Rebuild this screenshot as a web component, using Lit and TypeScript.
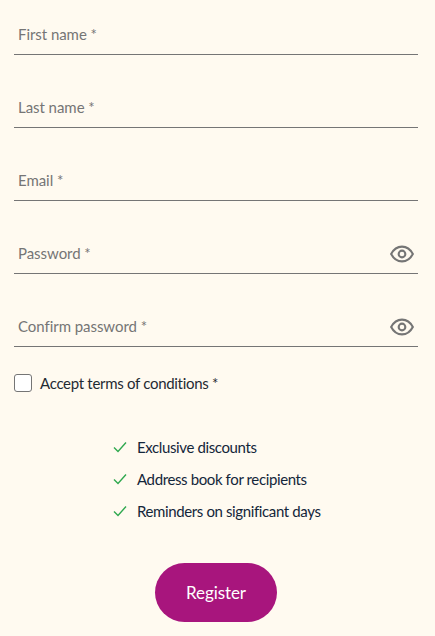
import { LitElement, html, css, svg } from "lit";
import { customElement } from "lit/decorators.js";

const eye = svg`<path d="M1.6 11.5C4 6.9 7.6 4.4 12 4.4s8 2.5 10.4 7.1C20 16.1 16.4 18.6 12 18.6S4 16.1 1.6 11.5Z" fill="none" stroke="#757575" stroke-width="2"/><circle cx="12" cy="11.5" r="3.2" fill="none" stroke="#757575" stroke-width="2"/>`;

@customElement("app-root")
export class AppRoot extends LitElement {
  static styles = css`
    :host {
      display: block;
      height: 636px;
      overflow: hidden;
      background: #fffaf0;
      font-family: Lato, "Liberation Sans", sans-serif;
      box-sizing: border-box;
      padding: 0 17px 0 14px;
    }
    .field {
      height: 55px;
      margin-bottom: 18px;
      box-sizing: border-box;
      border-bottom: 1px solid #757575;
      padding: 0 0 10px 4px;
      display: flex;
      align-items: flex-end;
      justify-content: space-between;
      color: #757575;
      font-size: 15px;
      line-height: 20px;
      letter-spacing: -0.05px;
    }
    .eye {
      width: 28px;
      height: 24px;
      margin: 0 2px -3px 0;
      display: block;
    }
    .terms {
      display: flex;
      align-items: center;
      gap: 8px;
      margin-top: 26px;
      height: 20px;
      color: #1f2a33;
      font-size: 15px;
      letter-spacing: -0.3px;
    }
    .box {
      width: 16px;
      height: 16px;
      border: 1px solid #757575;
      border-radius: 3px;
      background: #fff;
      flex: none;
    }
    ul {
      list-style: none;
      margin: 44px 0 0 99px;
      padding: 0;
      display: flex;
      flex-direction: column;
      gap: 12px;
    }
    li {
      display: flex;
      align-items: center;
      gap: 10px;
      height: 20px;
      color: #14263a;
      font-size: 15px;
      letter-spacing: -0.38px;
    }
    li svg {
      width: 14px;
      height: 12px;
      flex: none;
    }
    .actions {
      display: flex;
      justify-content: center;
      margin-top: 42px;
    }
    button {
      width: 122px;
      height: 59px;
      border: 0;
      border-radius: 30px;
      background: #a8157d;
      color: #fff;
      font: inherit;
      font-size: 17px;
      letter-spacing: -0.1px;
    }
  `;

  render() {
    const fields = [
      ["First name *", false],
      ["Last name *", false],
      ["Email *", false],
      ["Password *", true],
      ["Confirm password *", true],
    ] as const;
    const perks = ["Exclusive discounts", "Address book for recipients", "Reminders on significant days"];
    return html`
      ${fields.map(
        ([label, hasEye]) => html`<div class="field">
          <span>${label}</span>
          ${hasEye ? html`<svg class="eye" viewBox="0 0 24 23">${eye}</svg>` : null}
        </div>`
      )}
      <div class="terms"><span class="box"></span><span>Accept terms of conditions *</span></div>
      <ul>
        ${perks.map(
          (p) => html`<li>
            <svg viewBox="0 0 14 12"><path d="M1 6.5 5 10.5 13 1.5" fill="none" stroke="#2fa84f" stroke-width="1.4"/></svg>
            <span>${p}</span>
          </li>`
        )}
      </ul>
      <div class="actions"><button>Register</button></div>
    `;
  }
}
